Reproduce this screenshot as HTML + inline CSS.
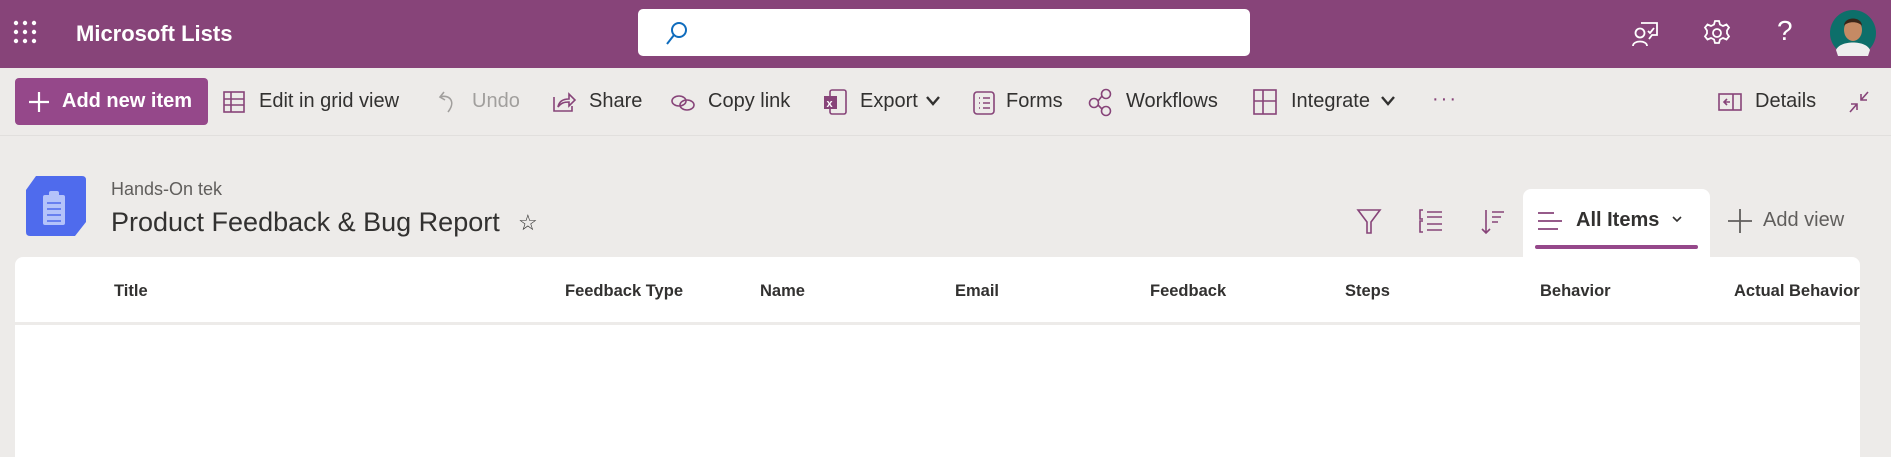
<!DOCTYPE html>
<html><head><meta charset="utf-8"><style>
*{margin:0;padding:0;box-sizing:border-box}
body{width:1891px;height:442px;overflow:hidden;background:#edebe9;font-family:"Liberation Sans",sans-serif;position:relative;color:#323130}
.top{position:absolute;left:0;top:0;width:1891px;height:68px;background:#874479}
.abs{position:absolute;white-space:nowrap}
.tb{font-size:20px;color:#323130;top:90px}
.col{font-size:16.5px;font-weight:bold;color:#323130;top:282px}
svg{position:absolute;overflow:visible}
</style></head><body>
<div class="top"></div>
<svg style="left:13px;top:20px" width="26" height="26" viewBox="0 0 26 26" fill="#fff">
<circle cx="3" cy="3" r="2.2"/><circle cx="12" cy="3" r="2.2"/><circle cx="21" cy="3" r="2.2"/>
<circle cx="3" cy="12" r="2.2"/><circle cx="12" cy="12" r="2.2"/><circle cx="21" cy="12" r="2.2"/>
<circle cx="3" cy="21" r="2.2"/><circle cx="12" cy="21" r="2.2"/><circle cx="21" cy="21" r="2.2"/></svg>
<div class="abs" style="left:76px;top:21px;font-size:22px;font-weight:bold;color:#fff">Microsoft Lists</div>
<div class="abs" style="left:638px;top:9px;width:612px;height:47px;background:#fff;border-radius:5px"></div>
<svg style="left:665px;top:21px" width="24" height="26" viewBox="0 0 24 26" fill="none" stroke="#0f6cbd" stroke-width="2"><circle cx="14" cy="9" r="7"/><path d="M9 14 L2 23"/></svg>
<svg style="left:1632px;top:20px" width="28" height="28" viewBox="0 0 28 28" fill="none" stroke="#fff" stroke-width="1.8"><path d="M9 3 H25 V15 H20 L17 19"/><circle cx="8" cy="13" r="4.5"/><path d="M1 26 C1 20 15 20 15 26"/><path d="M16 11 l2 2 l4 -5"/></svg>
<svg style="left:1703px;top:19px" width="28" height="28" viewBox="0 0 28 28" fill="none" stroke="#fff" stroke-width="1.8"><circle cx="14" cy="14" r="4"/><path d="M12 2 h4 l1 3.5 l3 1.5 l3.5 -1.5 l2.5 3 l-2 3 v3 l2 3 l-2.5 3 l-3.5 -1.5 l-3 1.5 l-1 3.5 h-4 l-1 -3.5 l-3 -1.5 l-3.5 1.5 l-2.5 -3 l2 -3 v-3 l-2 -3 l2.5 -3 l3.5 1.5 l3 -1.5z"/></svg>
<div class="abs" style="left:1777px;top:15px;font-size:28px;color:#fff">?</div>
<svg style="left:1830px;top:10px" width="46" height="46" viewBox="0 0 46 46"><circle cx="23" cy="23" r="23" fill="#0d6f6a"/><ellipse cx="23" cy="20" rx="9" ry="11" fill="#c58a64"/><path d="M14 16 C14 6 32 6 32 16 C29 11 17 11 14 16z" fill="#3a2518"/><path d="M6 40 C10 30 36 30 40 40 L38 46 H8z" fill="#eee"/></svg>
<div class="abs" style="left:15px;top:78px;width:193px;height:47px;background:#95488a;border-radius:4px"></div>
<svg style="left:29px;top:92px" width="20" height="20" viewBox="0 0 20 20" stroke="#fff" stroke-width="2.2"><path d="M10 0 V20 M0 10 H20"/></svg>
<div class="abs" style="left:62px;top:90px;font-size:20px;font-weight:bold;color:#fff">Add new item</div>
<svg style="left:223px;top:91px" width="22" height="22" viewBox="0 0 22 22" fill="none" stroke="#874479" stroke-width="1.6"><rect x="1" y="1" width="20" height="20"/><path d="M1 8 H21 M1 14 H21 M8 1 V21"/></svg>
<div class="abs tb" style="left:259px">Edit in grid view</div>
<svg style="left:438px;top:90px" width="20" height="24" viewBox="0 0 20 24" fill="none" stroke="#a19f9d" stroke-width="1.6"><path d="M6 2 L2 7 L7 10 M2 7 C12 4 18 12 10 22"/></svg>
<div class="abs tb" style="left:472px;color:#a19f9d">Undo</div>
<svg style="left:552px;top:91px" width="24" height="22" viewBox="0 0 24 22" fill="none" stroke="#874479" stroke-width="1.6"><path d="M2 6 V20 H20 V15"/><path d="M6 16 C7 10 11 8 17 8 V3 L23 9 L17 15 V11 C12 11 9 12 6 16z"/></svg>
<div class="abs tb" style="left:589px">Share</div>
<svg style="left:670px;top:93px" width="26" height="20" viewBox="0 0 26 20" fill="none" stroke="#874479" stroke-width="1.6"><ellipse cx="9" cy="8" rx="7" ry="5"/><ellipse cx="17" cy="12" rx="7" ry="5"/></svg>
<div class="abs tb" style="left:708px">Copy link</div>
<svg style="left:822px;top:88px" width="26" height="28" viewBox="0 0 26 28"><rect x="8" y="2" width="16" height="24" rx="2" fill="none" stroke="#874479" stroke-width="1.6"/><rect x="2" y="8" width="13" height="13" fill="#874479"/><text x="4.5" y="19" font-size="11" fill="#fff" font-family="Liberation Sans" font-weight="bold">x</text></svg>
<div class="abs tb" style="left:860px">Export</div>
<svg style="left:926px;top:96px" width="14" height="10" viewBox="0 0 14 10" fill="none" stroke="#323130" stroke-width="2.4"><path d="M1 1 L7 8 L13 1"/></svg>
<svg style="left:973px;top:91px" width="22" height="24" viewBox="0 0 22 24" fill="none" stroke="#874479" stroke-width="1.6"><rect x="1" y="1" width="20" height="22" rx="3"/><path d="M6 7h1 M10 7h7 M6 12h1 M10 12h7 M6 17h1 M10 17h7"/></svg>
<div class="abs tb" style="left:1006px">Forms</div>
<svg style="left:1088px;top:88px" width="24" height="28" viewBox="0 0 24 28" fill="none" stroke="#874479" stroke-width="1.6"><circle cx="6" cy="15" r="4.5"/><circle cx="18" cy="6" r="4.5"/><circle cx="18" cy="23" r="4.5"/><path d="M10 13 L14 8 M10 17 L14 21"/></svg>
<div class="abs tb" style="left:1126px">Workflows</div>
<svg style="left:1253px;top:89px" width="24" height="26" viewBox="0 0 24 26" fill="none" stroke="#874479" stroke-width="1.6"><rect x="1" y="1" width="22" height="24"/><path d="M1 12 H23 M10 1 V25"/></svg>
<div class="abs tb" style="left:1291px">Integrate</div>
<svg style="left:1381px;top:96px" width="14" height="10" viewBox="0 0 14 10" fill="none" stroke="#323130" stroke-width="2.4"><path d="M1 1 L7 8 L13 1"/></svg>
<div class="abs" style="left:1432px;top:88px;font-size:20px;color:#874479;letter-spacing:2px">···</div>
<svg style="left:1718px;top:93px" width="24" height="18" viewBox="0 0 24 18" fill="none" stroke="#874479" stroke-width="1.6"><rect x="1" y="1" width="22" height="16"/><path d="M15 1 V17 M12 9 H6 M9 6 L6 9 L9 12"/></svg>
<div class="abs tb" style="left:1755px">Details</div>
<svg style="left:1848px;top:90px" width="22" height="24" viewBox="0 0 22 24" fill="none" stroke="#874479" stroke-width="1.6"><path d="M20 2 L13 10 M13 4 V10 H19 M2 22 L9 14 M9 20 V14 H3"/></svg>
<div class="abs" style="left:0;top:135px;width:1891px;height:1px;background:#e1dfdd"></div>
<svg style="left:26px;top:176px" width="62" height="62" viewBox="0 0 62 62"><path d="M10 0 H56 Q60 0 60 4 V46 L49 60 H4 Q0 60 0 56 V14z" fill="#4f6bed"/><rect x="17" y="19" width="22" height="30" rx="2" fill="#b4c3fa"/><rect x="23" y="15" width="10" height="6" rx="2" fill="#b4c3fa"/><path d="M21 27h14M21 33h14M21 39h14M21 45h14" stroke="#4f6bed" stroke-width="1.5"/></svg>
<div class="abs" style="left:111px;top:179px;font-size:18px;color:#605e5c">Hands-On tek</div>
<div class="abs" style="left:111px;top:207px;font-size:27px;color:#323130">Product Feedback &amp; Bug Report</div>
<div class="abs" style="left:518px;top:210px;font-size:22px;color:#323130">☆</div>
<svg style="left:1357px;top:209px" width="24" height="26" viewBox="0 0 24 26" fill="none" stroke="#874479" stroke-width="1.6"><path d="M1 1 H23 L14 13 V24 H10 V13z"/></svg>
<svg style="left:1419px;top:209px" width="24" height="24" viewBox="0 0 24 24" fill="none" stroke="#874479" stroke-width="1.6"><path d="M4 1 H1 V10 H4 M4 12 H1 V23 H4 M8 3 H23 M8 8 H23 M8 15 H23 M8 21 H23"/></svg>
<svg style="left:1481px;top:209px" width="24" height="26" viewBox="0 0 24 26" fill="none" stroke="#874479" stroke-width="1.6"><path d="M5 1 V24 M1 20 L5 24 L9 20 M11 3 H23 M11 8 H20 M11 13 H17"/></svg>
<div class="abs" style="left:1523px;top:189px;width:187px;height:72px;background:#fff;border-radius:8px 8px 0 0"></div>
<svg style="left:1538px;top:211px" width="24" height="20" viewBox="0 0 24 20" stroke="#874479" stroke-width="1.8"><path d="M0 2 H16 M0 10 H24 M0 18 H20"/></svg>
<div class="abs" style="left:1576px;top:209px;font-size:20px;font-weight:bold;color:#323130">All Items</div>
<svg style="left:1672px;top:216px" width="10" height="7" viewBox="0 0 10 7" fill="none" stroke="#323130" stroke-width="1.6"><path d="M1 1 L5 5 L9 1"/></svg>
<div class="abs" style="left:1535px;top:245px;width:163px;height:4px;background:#95488a;border-radius:2px"></div>
<svg style="left:1728px;top:209px" width="24" height="24" viewBox="0 0 24 24" stroke="#605e5c" stroke-width="1.8"><path d="M12 0 V24 M0 12 H24"/></svg>
<div class="abs" style="left:1763px;top:209px;font-size:20px;color:#605e5c">Add view</div>
<div class="abs" style="left:15px;top:257px;width:1845px;height:200px;background:#fff;border-radius:8px 8px 0 0"></div>
<div class="abs" style="left:15px;top:322px;width:1845px;height:3px;background:#edebe9"></div>
<div class="abs col" style="left:114px">Title</div>
<div class="abs col" style="left:565px">Feedback Type</div>
<div class="abs col" style="left:760px">Name</div>
<div class="abs col" style="left:955px">Email</div>
<div class="abs col" style="left:1150px">Feedback</div>
<div class="abs col" style="left:1345px">Steps</div>
<div class="abs col" style="left:1540px">Behavior</div>
<div class="abs col" style="left:1734px">Actual Behavior</div>
</body></html>
